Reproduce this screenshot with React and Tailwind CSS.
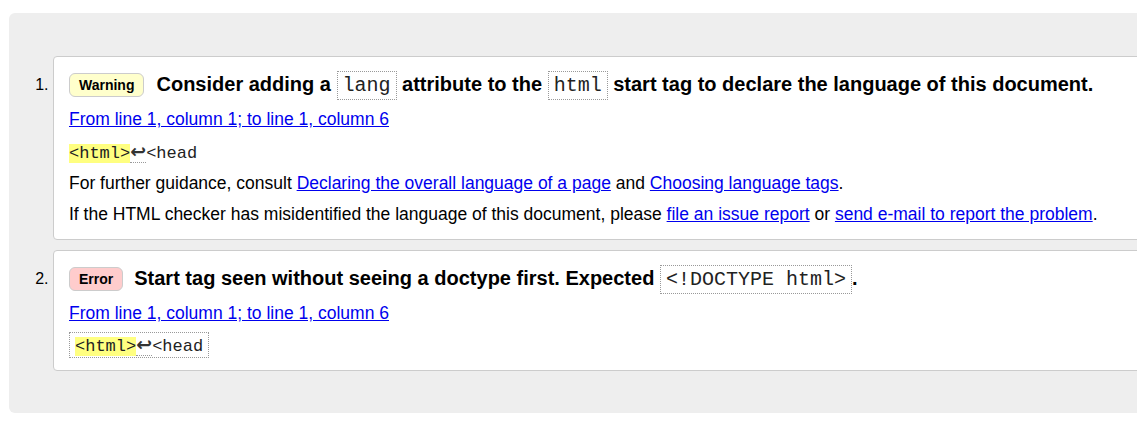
import React from "react";

const sans = { fontFamily: '"Liberation Sans", Arial, sans-serif' };

function Code({ children }) {
  return (
    <span className="border border-dotted border-[#999] px-[5px] py-[2px] font-['Liberation_Mono',monospace] font-normal text-[20px] text-[#222]">
      {children}
    </span>
  );
}

function Link({ children }) {
  return <a href="#" className="text-[#0000ee] underline">{children}</a>;
}

function Extract() {
  return (
    <>
      <span className="bg-[#ffff80]">&lt;html&gt;</span>
      <span className="border-b border-dotted border-[#999] font-['DejaVu_Sans',sans-serif] font-bold text-[#333] text-[19px] leading-[18px]">↩</span>
      <span>&lt;head</span>
    </>
  );
}

function Badge({ children, bg }) {
  return (
    <span className={`shrink-0 border border-[#ccc] rounded-[6px] px-[9px] leading-[22px] text-[14px] font-bold text-black ${bg}`}>
      {children}
    </span>
  );
}

export default function App() {
  return (
    <div className="w-[1137px] h-[426px] overflow-hidden bg-white text-black" style={sans}>
      <div className="ml-[9px] mt-[13px] w-[1190px] bg-[#eeeeee] rounded-[6px] pt-[43px] pb-[42px] pl-[44px]">
        <ol className="list-decimal text-[17.5px] pr-[20px] marker:text-[16px]">
          <li className="bg-white border border-[#cccccc] rounded-[4px] pt-[13px] pb-[15px] px-[15px] mb-[10px]">
            <div className="flex items-center h-[30px] leading-[30px] whitespace-nowrap">
              <Badge bg="bg-[#ffffcc]">Warning</Badge>
              <span className="ml-[12px] text-[20px] font-bold">
                Consider adding a <Code>lang</Code> attribute to the <Code>html</Code> start tag to declare the language of this document.
              </span>
            </div>
            <div className="mt-[9px] h-[20px] leading-[20px]">
              <Link>From line 1, column 1; to line 1, column 6</Link>
            </div>
            <div className="mt-[13px] h-[20px] leading-[20px] font-['Liberation_Mono',monospace] text-[17px] text-[#222] whitespace-pre">
              <Extract />
            </div>
            <div className="mt-[11px] h-[20px] leading-[20px] whitespace-nowrap">
              For further guidance, consult <Link>Declaring the overall language of a page</Link> and <Link>Choosing language tags</Link>.
            </div>
            <div className="mt-[11px] h-[20px] leading-[20px] whitespace-nowrap">
              If the HTML checker has misidentified the language of this document, please <Link>file an issue report</Link> or <Link>send e-mail to report the problem</Link>.
            </div>
          </li>
          <li className="bg-white border border-[#cccccc] rounded-[4px] pt-[13px] pb-[12px] px-[15px]">
            <div className="flex items-center h-[30px] leading-[30px] whitespace-nowrap">
              <Badge bg="bg-[#ffcccc]">Error</Badge>
              <span className="ml-[11px] text-[20px] font-bold">
                Start tag seen without seeing a doctype first. Expected <Code>&lt;!DOCTYPE html&gt;</Code>.
              </span>
            </div>
            <div className="mt-[9px] h-[20px] leading-[20px]">
              <Link>From line 1, column 1; to line 1, column 6</Link>
            </div>
            <div className="mt-[9px] w-fit border border-dotted border-[#999] px-[5px] py-[2px] h-[26px] leading-[20px] font-['Liberation_Mono',monospace] text-[17px] text-[#222] whitespace-pre">
              <Extract />
            </div>
          </li>
        </ol>
      </div>
    </div>
  );
}
